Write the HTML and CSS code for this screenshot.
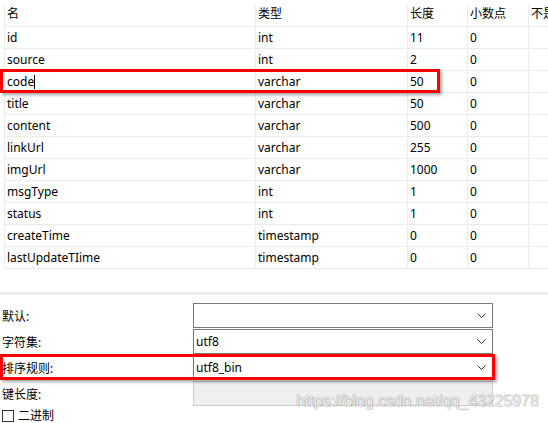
FILE: index.html
```html
<!DOCTYPE html>
<html lang="zh">
<head>
<meta charset="utf-8">
<title>字段</title>
<link rel="stylesheet" href="styles.css">
</head>
<body>
<div class="page">
  <div class="table-wrap">
    <div class="grid">
      <div class="cell head">名</div><div class="cell head">类型</div><div class="cell head">长度</div><div class="cell head">小数点</div><div class="cell head">不是 null</div>
      <div class="cell">id</div><div class="cell">int</div><div class="cell">11</div><div class="cell">0</div><div class="cell"></div>
      <div class="cell">source</div><div class="cell">int</div><div class="cell">2</div><div class="cell">0</div><div class="cell"></div>
      <div class="cell">code<span class="caret"></span></div><div class="cell">varchar</div><div class="cell">50</div><div class="cell">0</div><div class="cell"></div>
      <div class="cell">title</div><div class="cell">varchar</div><div class="cell">50</div><div class="cell">0</div><div class="cell"></div>
      <div class="cell">content</div><div class="cell">varchar</div><div class="cell">500</div><div class="cell">0</div><div class="cell"></div>
      <div class="cell">linkUrl</div><div class="cell">varchar</div><div class="cell">255</div><div class="cell">0</div><div class="cell"></div>
      <div class="cell">imgUrl</div><div class="cell">varchar</div><div class="cell">1000</div><div class="cell">0</div><div class="cell"></div>
      <div class="cell">msgType</div><div class="cell">int</div><div class="cell">1</div><div class="cell">0</div><div class="cell"></div>
      <div class="cell">status</div><div class="cell">int</div><div class="cell">1</div><div class="cell">0</div><div class="cell"></div>
      <div class="cell">createTime</div><div class="cell">timestamp</div><div class="cell">0</div><div class="cell">0</div><div class="cell"></div>
      <div class="cell">lastUpdateTIime</div><div class="cell">timestamp</div><div class="cell">0</div><div class="cell">0</div><div class="cell"></div>
    </div>
    <div class="mark mark-code"></div>
  </div>

  <div class="divider"></div>

  <div class="form">
    <div class="row">
      <span class="label">默认:</span>
      <div class="select"><span class="value"></span><svg class="chev" width="9" height="5" viewBox="0 0 9 5"><path d="M0.5 0.5 L4.5 4.5 L8.5 0.5" fill="none" stroke="#333" stroke-width="1"/></svg></div>
    </div>
    <div class="row">
      <span class="label">字符集:</span>
      <div class="select"><span class="value">utf8</span><svg class="chev" width="9" height="5" viewBox="0 0 9 5"><path d="M0.5 0.5 L4.5 4.5 L8.5 0.5" fill="none" stroke="#333" stroke-width="1"/></svg></div>
    </div>
    <div class="row">
      <span class="label">排序规则:</span>
      <div class="select"><span class="value">utf8_bin</span><svg class="chev" width="9" height="5" viewBox="0 0 9 5"><path d="M0.5 0.5 L4.5 4.5 L8.5 0.5" fill="none" stroke="#333" stroke-width="1"/></svg></div>
    </div>
    <div class="row">
      <span class="label">键长度:</span>
      <div class="select disabled"></div>
    </div>
    <label class="check-row"><span class="box"></span><span class="check-text">二进制</span></label>
    <div class="mark mark-collate"></div>
    <div class="watermark">https://blog.csdn.net/qq_43225978</div>
  </div>
</div>
</body>
</html>
```

FILE: styles.css
```css
html, body {
  margin: 0;
  padding: 0;
  background: #ffffff;
  overflow: hidden;
}

body {
  font-family: "Noto Sans", "Noto Sans CJK SC", sans-serif;
  font-size: 12px;
  color: #000;
  width: 548px;
  height: 423px;
}

.page {
  width: 548px;
  height: 423px;
  overflow: hidden;
}

.table-wrap {
  position: relative;
  padding-top: 5px;
}

.grid {
  display: grid;
  grid-template-columns: 251px 152px 60px 61px 80px;
  margin-left: 4px;
  width: 604px;
}

.cell {
  height: 21px;
  line-height: 21px;
  border-left: 1px solid #ebebeb;
  border-bottom: 1px solid #ebebeb;
  padding-left: 2px;
  white-space: nowrap;
  overflow: hidden;
}

.cell.head {
  line-height: 18px;
}

.caret {
  display: inline-block;
  width: 1px;
  height: 14px;
  background: #000;
  vertical-align: -3px;
}

.mark {
  position: absolute;
  border: 3px solid #ff0000;
  box-shadow: 2px 2px 3px rgba(0, 0, 0, 0.35);
  box-sizing: border-box;
  pointer-events: none;
}

.mark-code {
  left: 0;
  top: 69px;
  width: 440px;
  height: 24px;
}

.divider {
  height: 3px;
  background: #eeeeee;
  margin-top: 23px;
}

.form {
  position: relative;
  padding-top: 8px;
  display: flex;
  flex-direction: column;
  gap: 1px;
}

.row {
  display: flex;
  align-items: center;
  height: 25px;
}

.label {
  width: 193px;
  padding-left: 2px;
  box-sizing: border-box;
  flex: none;
}

.select {
  width: 300px;
  height: 25px;
  box-sizing: border-box;
  border: 1px solid #7a7a7a;
  display: flex;
  align-items: center;
  justify-content: space-between;
  padding: 0 6px 0 2px;
  background: #fff;
}

.select.disabled {
  background: #efefef;
  border-color: #cccccc;
}

.chev {
  display: block;
  flex: none;
}

.check-row {
  display: flex;
  align-items: center;
  gap: 4px;
  padding-left: 2px;
  margin-top: 2px;
  height: 13px;
  line-height: 13px;
}

.check-text {
  line-height: 13px;
}

.box {
  width: 12px;
  height: 12px;
  box-sizing: border-box;
  border: 1px solid #333;
  background: #fff;
}

.mark-collate {
  left: 0;
  top: 59px;
  width: 495px;
  height: 26px;
}

.watermark {
  position: absolute;
  left: 296px;
  top: 97px;
  font-family: "Liberation Sans", Arial, sans-serif;
  font-size: 15.8px;
  line-height: 18px;
  color: rgba(255, 255, 255, 0.85);
  text-shadow: 0 0 1px rgba(0, 0, 0, 0.45), 1px 1px 1px rgba(0, 0, 0, 0.15);
  white-space: nowrap;
  pointer-events: none;
}
```
